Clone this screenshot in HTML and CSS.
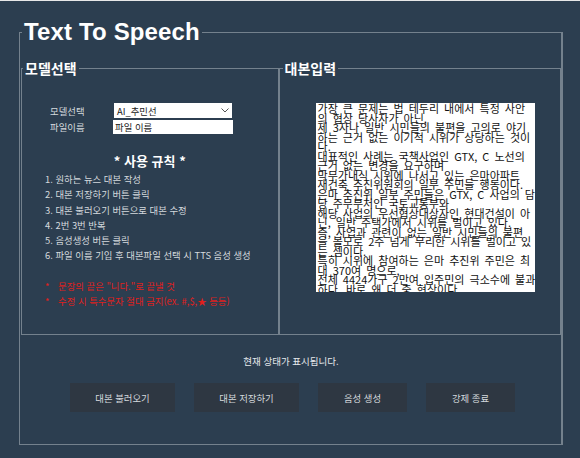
FILE: index.html
```html
<!DOCTYPE html>
<html lang="ko">
  <head>
    <meta charset="UTF-8" />
    <title>Text To Speech</title>
    <link rel="stylesheet" href="styles.css">
  </head>
  <body>
    <fieldset class="frame">
      <legend class="frame-title">Text To Speech</legend>
      <div class="panels">
        <fieldset class="panel panel-left">
          <legend class="panel-title">모델선택</legend>
          <div class="form">
            <label class="form-label">모델선택</label>
            <div class="select"><span>AI_추민선</span>
              <svg class="chevron" width="8" height="5" viewBox="0 0 8 5"><path d="M0.5 0.5 L4 4 L7.5 0.5" fill="none" stroke="#555" stroke-width="1" /></svg>
            </div>
            <label class="form-label">파일이름</label>
            <input type="text" class="name-input" value="파일 이름" />
          </div>
          <h2 class="rules-title">* 사용 규칙 *</h2>
          <ol class="rules">
            <li>1. 원하는 뉴스 대본 작성</li>
            <li>2. 대본 저장하기 버튼 클릭</li>
            <li>3. 대본 불러오기 버튼으로 대본 수정</li>
            <li>4. 2번 3번 반복</li>
            <li>5. 음성생성 버튼 클릭</li>
            <li>6. 파일 이름 기입 후 대본파일 선택 시 TTS 음성 생성</li>
          </ol>
          <ul class="warnings">
            <li><span>*</span>문장의 끝은 "니다."로 끝낼 것</li>
            <li><span>*</span>수정 시 특수문자 절대 금지(ex. #,$,★ 등등)</li>
          </ul>
        </fieldset>
        <fieldset class="panel panel-right">
          <legend class="panel-title">대본입력</legend>
          <div class="script-box">
            <div>가장 큰 문제는 법 테두리 내에서 특정 사안</div>
            <div>의 협상 당사자가 아닌,</div>
            <div>제 3자나 일반 시민들의 불편을 고의로 야기</div>
            <div>하는 근거 없는 이기적 시위가 상당하는 것이</div>
            <div>다.</div>
            <div>대표적인 사례는 국책사업인 GTX, C 노선의</div>
            <div>근거 없는 변경을 요구하며</div>
            <div>막무가내식 시위에 나서고 있는 은마아파트</div>
            <div>재건축 추진위원회의 일부 주민들 행동이다.</div>
            <div>은마 추진위 일부 주민들은 GTX, C 사업의 담</div>
            <div>당 주무부처인 국토교통부와</div>
            <div>해당 사업의 우선협상대상자인 현대건설이 아</div>
            <div>닌, 일반 주택가에서 시위를 벌이고 있다.</div>
            <div>즉, 사업과 관련이 없는 일반 시민들의 불편</div>
            <div>을 볼모로 2주 넘게 무리한 시위를 벌이고 있</div>
            <div>는 셈이다.</div>
            <div>특히 시위에 참여하는 은마 추진위 주민은 최</div>
            <div>대 370여 명으로,</div>
            <div>전체 4424가구 2만여 입주민의 극소수에 불과</div>
            <div>하다. 바로 왜 더 중 현상이다</div>
          </div>
        </fieldset>
      </div>
      <p class="status">현재 상태가 표시됩니다.</p>
      <div class="actions">
        <button class="btn btn-wide">대본 불러오기</button>
        <button class="btn btn-wide">대본 저장하기</button>
        <button class="btn">음성 생성</button>
        <button class="btn">강제 종료</button>
      </div>
    </fieldset>
  </body>
</html>
```

FILE: styles.css
```css
html, body {
  height: 100%;
}

body {
  margin: 0;
  box-sizing: border-box;
  padding: 17px 17px 14px 19px;
  overflow: hidden;
  background-color: #2c3e50;
  border-top: 1px solid #e8e8e8;
  font-family: "Noto Sans CJK KR", "Noto Sans", sans-serif;
  color: #e6e9ec;
}

fieldset {
  margin: 0;
  min-width: 0;
}

.frame {
  height: 427px;
  box-sizing: border-box;
  padding: 0 0 0 1px;
  border: 1px solid #74818d;
  border-right-width: 2px;
}

.frame-title {
  margin-left: 1px;
  padding: 0 2px;
  font-family: "Liberation Sans", Arial, sans-serif;
  font-size: 24px;
  font-weight: bold;
  letter-spacing: 0.15px;
  line-height: 28px;
  color: #fff;
}

.panels {
  display: flex;
  height: 275px;
  margin-top: 14px;
}

.panel {
  box-sizing: border-box;
  padding: 0;
  border: 1px solid #74818d;
}

.panel-left {
  width: 259px;
  border-right-width: 2px;
}

.panel-right {
  width: 282px;
  border-left: 0;
}

.panel-title {
  margin-left: 1px;
  padding: 0 2px;
  font-size: 14px;
  font-weight: bold;
  line-height: 16px;
  color: #fff;
}

.panel-right .panel-title {
  margin-left: 3px;
}

.form {
  display: grid;
  grid-template-columns: 64px 118px;
  row-gap: 2px;
  align-items: center;
  margin: 27px 0 0 28px;
}

.form-label {
  font-size: 9.4px;
  line-height: 14px;
  color: #d5dade;
}

.select {
  display: flex;
  align-items: center;
  justify-content: space-between;
  box-sizing: border-box;
  height: 15px;
  padding: 0 3px 0 3px;
  background-color: #fff;
  color: #222;
  font-size: 9.4px;
}

.name-input {
  box-sizing: border-box;
  width: 120px;
  height: 14px;
  margin-left: -1px;
  padding: 0 2px;
  border: 0;
  background-color: #fff;
  color: #222;
  font-family: inherit;
  font-size: 9.4px;
}

.rules-title {
  margin: 19px 0 0;
  text-align: center;
  font-size: 13px;
  font-weight: bold;
  line-height: 16px;
  color: #fff;
}

.rules, .warnings {
  list-style: none;
  margin: 0;
  padding: 0 0 0 23px;
  font-size: 9.4px;
  line-height: 15.3px;
}

.rules {
  margin-top: 3px;
  color: #d5dade;
}

.warnings {
  margin-top: 15px;
  color: #e0201c;
}

.warnings span {
  display: inline-block;
  width: 13px;
}

.script-box {
  box-sizing: border-box;
  width: 219px;
  height: 189px;
  margin: 27px 0 0 36px;
  padding: 1px 1px 0 2px;
  overflow: hidden;
  background-color: #fff;
  color: #111;
  font-size: 11px;
  line-height: 9.5px;
  white-space: nowrap;
  word-spacing: 2px;
}

.status {
  margin: 19px 0 0;
  text-align: center;
  font-size: 9.5px;
  line-height: 14px;
}

.actions {
  display: flex;
  margin: 15px 0 0 49px;
  gap: 19px;
}

.btn {
  width: 89px;
  height: 29px;
  padding: 0;
  border: 0;
  background-color: #2e3742;
  color: #d5dade;
  font-family: inherit;
  font-size: 9.4px;
}

.btn-wide {
  width: 105px;
}
```
